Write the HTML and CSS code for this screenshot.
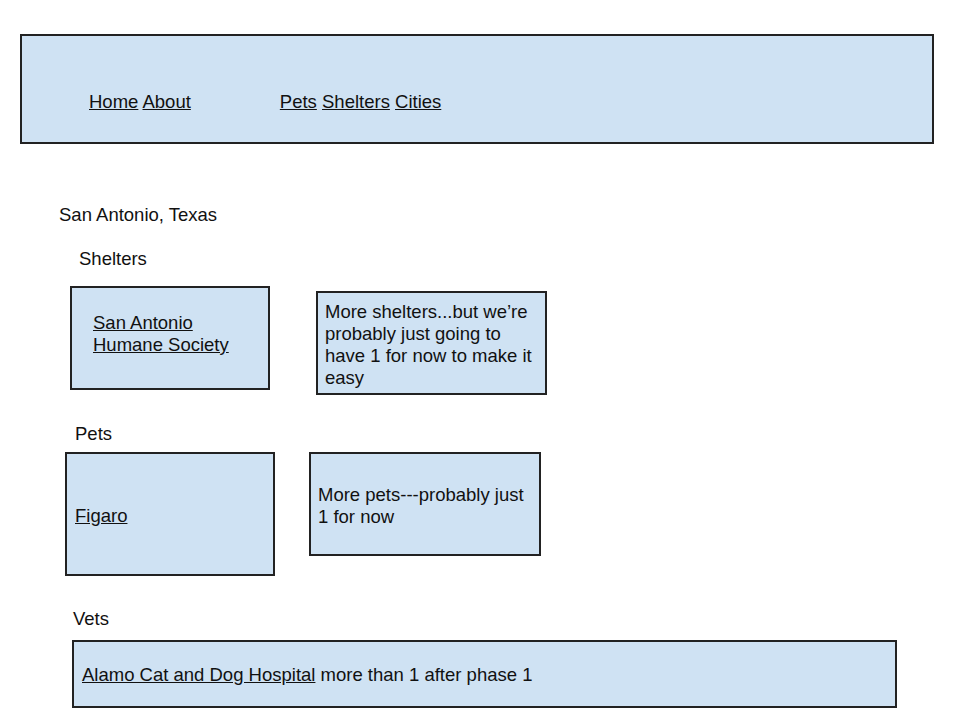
FILE: index.html
```html
<!DOCTYPE html>
<html lang="en">

<head>
    <meta charset="UTF-8">
    <meta name="viewport" content="width=device-width, initial-scale=1.0">
    <title>San Antonio, Texas</title>
    <link rel="stylesheet" href="styles.css">
</head>

<body>
    <header class="nav">
        <div class="nav-group">
            <a href="#">Home</a> <a href="#">About</a>
        </div>
        <div class="nav-group models">
            <a href="#">Pets</a> <a href="#">Shelters</a> <a href="#">Cities</a>
        </div>
    </header>

    <main class="city">
        <h1 class="city-name">San Antonio, Texas</h1>

        <h2 class="section-title shelters-title">Shelters</h2>
        <div class="row shelters">
            <div class="card shelter-main">
                <a href="#">San Antonio<br>Humane Society</a>
            </div>
            <div class="card note shelter-note">
                More shelters...but we’re probably just going to have 1 for now to make it easy
            </div>
        </div>

        <h2 class="section-title pets-title">Pets</h2>
        <div class="row pets">
            <div class="card pet-main">
                <a href="#">Figaro</a>
            </div>
            <div class="card note pet-note">
                More pets---probably just 1 for now
            </div>
        </div>

        <h2 class="section-title vets-title">Vets</h2>
        <div class="card vets">
            <a href="#">Alamo Cat and Dog Hospital</a> more than 1 after phase 1
        </div>
    </main>
</body>

</html>
```

FILE: styles.css
```css
body {
    margin: 0;
    padding: 0;
    font-family: 'Liberation Sans', Arial, sans-serif;
    font-size: 18.5px;
    line-height: 22px;
    color: #111;
    background: #ffffff;
}

a {
    color: #111;
    text-decoration: underline;
}

.card,
.nav {
    background-color: #cfe2f3;
    border: 2px solid #222;
    box-sizing: border-box;
}

/* top bar */
.nav {
    display: flex;
    margin: 34px 0 0 20px;
    width: 914px;
    height: 110px;
    padding: 55px 0 0 67px;
}

.nav-group.models {
    margin-left: 89px;
}

/* city page */
.city-name,
.section-title {
    font-size: 18.5px;
    font-weight: normal;
    margin: 0;
}

.city-name {
    margin: 60px 0 0 59px;
}

.shelters-title {
    margin: 22px 0 0 79px;
}

.pets-title {
    margin: 28px 0 0 75px;
}

.vets-title {
    margin: 32px 0 0 73px;
}

.row {
    display: flex;
    align-items: flex-start;
}

.shelters {
    margin: 16px 0 0 70px;
}

.shelter-main {
    width: 200px;
    height: 104px;
    padding: 24px 0 0 21px;
}

.shelter-note {
    margin: 5px 0 0 46px;
    width: 231px;
    height: 104px;
    padding: 8px 7px 0 7px;
}

.pets {
    margin: 7px 0 0 65px;
}

.pet-main {
    width: 210px;
    height: 124px;
    padding: 51px 0 0 8px;
}

.pet-note {
    margin-left: 34px;
    width: 232px;
    height: 104px;
    padding: 30px 7px 0 7px;
}

.vets {
    margin: 10px 0 0 72px;
    width: 825px;
    height: 68px;
    padding: 22px 0 0 8px;
}
```
